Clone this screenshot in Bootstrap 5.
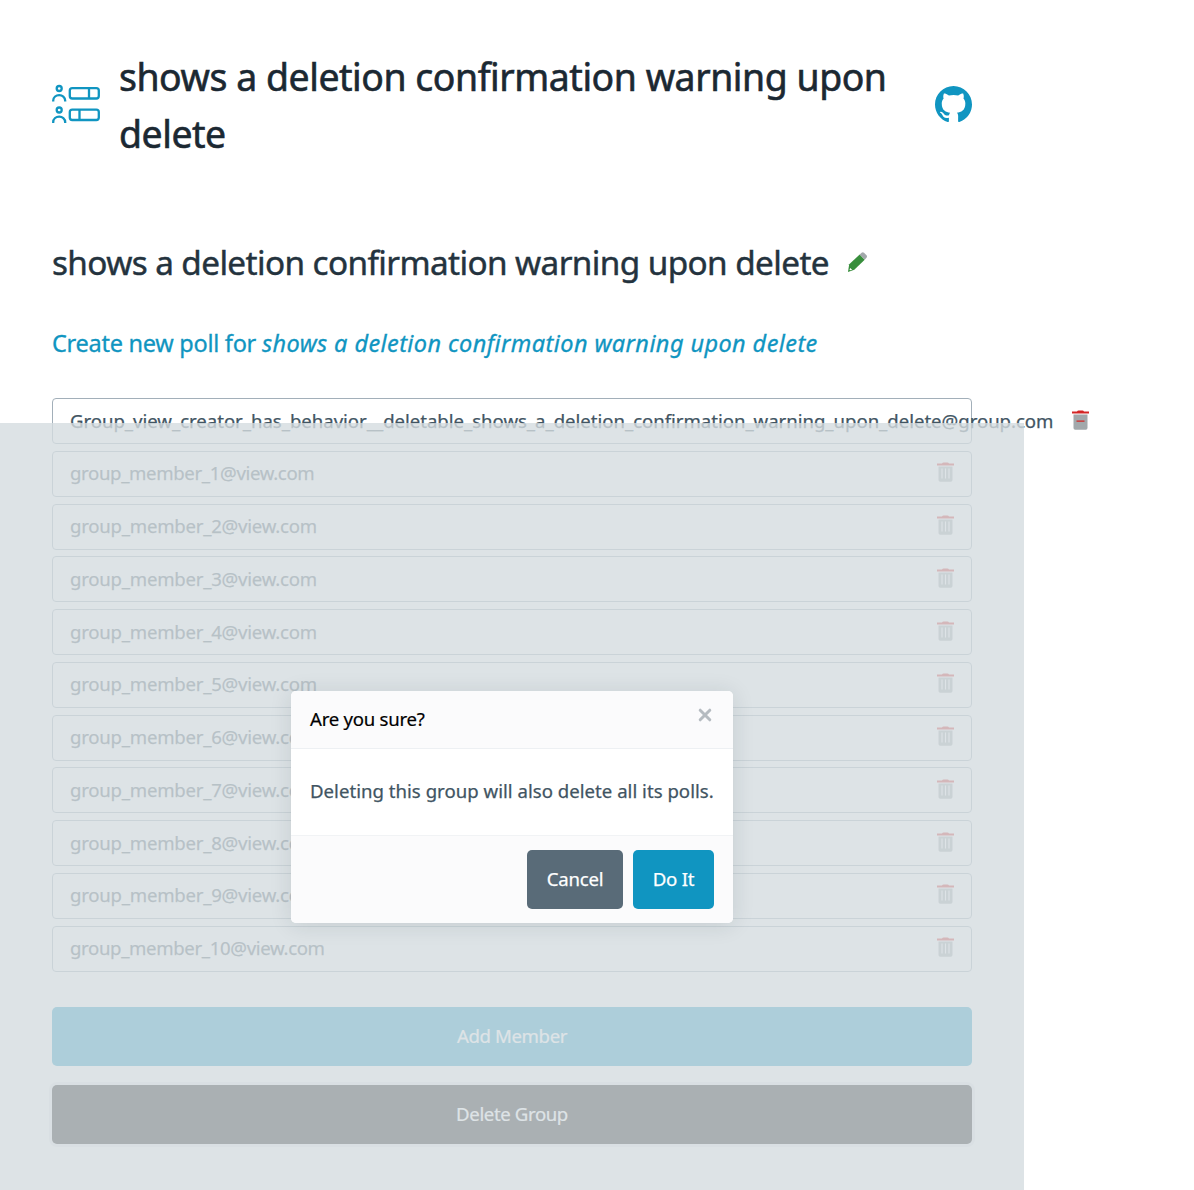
<!DOCTYPE html>
<html lang="en">
<head>
<meta charset="utf-8">
<title>Group</title>
<link rel="stylesheet" href="https://cdn.jsdelivr.net/npm/bootstrap@5.3.0/dist/css/bootstrap.min.css">
<style>
body{font-family:"Noto Sans","Open Sans",sans-serif;font-size:18.6px;color:#415462;background:#fff;height:1190px;overflow:hidden}
.page{width:1024px;padding:0 52px}
.masthead{padding-top:48px;height:162px}
.masthead h1{font-size:37.4px;line-height:57px;font-weight:400;color:#1b2832;width:816px;letter-spacing:-.45px;-webkit-text-stroke:.6px #1b2832;margin:0}
.logo{width:48px;margin:36px 19px 0 0;flex:none}
.octo{margin-top:37.5px}
.group-name{margin-top:75px;height:50px}
.group-name h2{font-size:33.3px;line-height:50px;font-weight:400;color:#24333e;margin:0 18px 0 0;white-space:nowrap;letter-spacing:-.6px;-webkit-text-stroke:.45px #24333e}
.new-poll{margin-top:38px;height:36px;line-height:36px;font-size:23.5px;color:#1095c1;text-decoration:none;white-space:nowrap;display:block;letter-spacing:-.27px;-webkit-text-stroke:.3px #1095c1}
.new-poll em{letter-spacing:.41px}
.members{margin-top:37px;gap:6.75px}
.member{height:46px;border:1px solid #a2afb9;border-radius:4px;padding:0 17px;white-space:nowrap;letter-spacing:-.24px;-webkit-text-stroke:.25px;line-height:26px}
.member span{margin-top:-1px}
.member.creator{letter-spacing:-.03px}
.member.tight{letter-spacing:-.35px}
.member svg{flex:none;margin-left:19px;margin-top:-3px}
.wide{height:59px;border:0;border-radius:5px;font-size:18.6px;color:#fff;letter-spacing:-.38px;padding:0 0 2px;-webkit-text-stroke:.2px}
.wide.add{background:#1095c1;margin-top:35.500px}
.wide.del{background:#000;margin-top:19px;box-shadow:0 0 0 3px rgba(89,107,120,.125)}
.shade{left:0;top:423px;width:1024px;height:767px;background:rgba(213,220,224,.8)}
.dialog{width:442px;height:232px;border-radius:5px;background:#fff;box-shadow:0 2px 22px rgba(27,40,50,.12);overflow:hidden}
.dialog header{height:58px;padding:0 19px;background:#fbfbfc;border-bottom:1px solid #edf0f3;color:#000;letter-spacing:-.25px;-webkit-text-stroke:.2px}
.dialog p{height:86px;padding:0 19px;margin:0;line-height:83px;white-space:nowrap;letter-spacing:.02px;-webkit-text-stroke:.25px}
.dialog footer{height:88px;padding:0 19px;gap:10px;background:#fbfbfc;border-top:1px solid #f1f3f5}
.dialog .btn{height:59px;border:0;border-radius:5px;color:#fff;font-size:18.6px;padding:0;letter-spacing:-.25px;-webkit-text-stroke:.25px}
.dialog .cancel{width:96px;background:#596b78}
.dialog .doit{width:81px;background:#1095c1}
.dialog header svg{margin:-9px 2px 0 0}
</style>
<script src="https://cdn.jsdelivr.net/npm/bootstrap@5.3.0/dist/js/bootstrap.bundle.min.js"></script>
</head>
<body>
<svg class="d-none">
<symbol id="bin" viewBox="0 0 17 20"><path d="M1.500 4.500h14V18q0 1.700-1.700 1.700H3.200Q1.500 19.700 1.500 18z" fill="#a2a8ab"/><path d="M5 6.500v10M8.500 6.500v10M12 6.500v10" stroke="#fff" stroke-width="1.100"/><path d="M0 1.600h5Q5.500.500 6.500.500h4q1 0 1.500 1.100h5V3.600H0z" fill="#d32626"/></symbol>
</svg>
<main class="page">
<header class="masthead d-flex align-items-start justify-content-between">
<div class="d-flex">
<svg class="logo" width="48" height="40" viewBox="0 0 48 40" fill="none" stroke="#1095c1" stroke-width="2.300"><circle cx="7.200" cy="4.500" r="2.500"/><path d="M1.200 17.600v-.8C1.200 9.200 13.200 9.200 13.200 16.800v.8M1.200 39.100v-.8c0-7.600 12-7.600 12 0v.8"/><circle cx="7.200" cy="26" r="2.500"/><rect x="17.800" y="4.100" width="29" height="10.400" rx="2.500"/><rect x="17.800" y="25.600" width="29" height="10.400" rx="2.500"/><path d="M37 4v10.500M27.500 25.500V36"/></svg>
<h1>shows a deletion confirmation warning upon delete</h1>
</div>
<svg class="octo" width="37" height="37" viewBox="0 0 16 16" fill="#1095c1"><path d="M8 0C3.580 0 0 3.580 0 8c0 3.540 2.290 6.530 5.470 7.590.4.070.55-.17.55-.38 0-.19-.01-.82-.01-1.490-2.010.37-2.530-.49-2.690-.94-.09-.23-.48-.94-.82-1.130-.28-.15-.68-.52-.01-.53.63-.01 1.080.58 1.230.82.72 1.210 1.870.87 2.330.66.07-.52.28-.87.51-1.070-1.780-.2-3.640-.89-3.640-3.950 0-.87.31-1.590.82-2.150-.08-.2-.36-1.020.08-2.120 0 0 .67-.21 2.200.82.64-.18 1.320-.27 2-.27s1.360.09 2 .27c1.530-1.040 2.200-.82 2.200-.82.44 1.100.16 1.920.08 2.120.51.56.82 1.270.82 2.150 0 3.070-1.870 3.750-3.650 3.950.29.25.54.73.54 1.480 0 1.070-.01 1.930-.01 2.200 0 .21.15.46.55.38A8.010 8.010 0 0 0 16 8c0-4.420-3.580-8-8-8z"/></svg>
</header>
<div class="group-name d-flex align-items-center">
<h2>shows a deletion confirmation warning upon delete</h2>
<svg width="21" height="21" viewBox="0 0 21 21"><path d="M2.200 12.200 12.700 2.600l5 5.200L7.300 17.700 1 20z" fill="#388e3c"/><path d="m12.700 2.600 1.900-1.800q1.200-1 2.400 0L19.500 3.300q1 1.200 0 2.400l-1.800 2.100z" fill="#a2a8ab"/><path d="m3.200 16 2 1.700-2 .6-.7-.5z" fill="#fff"/></svg>
</div>
<a class="new-poll" href="#">Create new poll for <em>shows a deletion confirmation warning upon delete</em></a>
<div class="members d-flex flex-column">
<div class="member creator d-flex align-items-center"><span>Group_view_creator_has_behavior__deletable_shows_a_deletion_confirmation_warning_upon_delete@group.com</span><svg width="17" height="20" viewBox="0 0 17 20"><path d="M1.500 4.500h14V18q0 1.700-1.700 1.700H3.200Q1.500 19.700 1.500 18z" fill="#a2a8ab"/><path d="M0 1.600h5Q5.500.5 6.500.5h4q1 0 1.500 1.100h5V3.600H0zM4.500 10.500h8v1.300h-8z" fill="#d32626"/></svg></div>
<div class="member tight d-flex align-items-center justify-content-between"><span>group_member_1@view.com</span><svg width="17" height="20"><use href="#bin"/></svg></div>
<div class="member d-flex align-items-center justify-content-between"><span>group_member_2@view.com</span><svg width="17" height="20"><use href="#bin"/></svg></div>
<div class="member d-flex align-items-center justify-content-between"><span>group_member_3@view.com</span><svg width="17" height="20"><use href="#bin"/></svg></div>
<div class="member d-flex align-items-center justify-content-between"><span>group_member_4@view.com</span><svg width="17" height="20"><use href="#bin"/></svg></div>
<div class="member d-flex align-items-center justify-content-between"><span>group_member_5@view.com</span><svg width="17" height="20"><use href="#bin"/></svg></div>
<div class="member d-flex align-items-center justify-content-between"><span>group_member_6@view.com</span><svg width="17" height="20"><use href="#bin"/></svg></div>
<div class="member d-flex align-items-center justify-content-between"><span>group_member_7@view.com</span><svg width="17" height="20"><use href="#bin"/></svg></div>
<div class="member d-flex align-items-center justify-content-between"><span>group_member_8@view.com</span><svg width="17" height="20"><use href="#bin"/></svg></div>
<div class="member d-flex align-items-center justify-content-between"><span>group_member_9@view.com</span><svg width="17" height="20"><use href="#bin"/></svg></div>
<div class="member tight d-flex align-items-center justify-content-between"><span>group_member_10@view.com</span><svg width="17" height="20"><use href="#bin"/></svg></div>
</div>
<button class="btn wide add w-100 d-block">Add Member</button>
<button class="btn wide del w-100 d-block">Delete Group</button>
</main>
<div class="shade position-absolute d-flex align-items-center justify-content-center">
<section class="dialog" role="dialog">
<header class="d-flex align-items-center justify-content-between"><span>Are you sure?</span><svg width="14" height="14" viewBox="0 0 14 14"><path d="m2.200 2.200 9.600 9.600m0-9.600-9.600 9.600" stroke="#b5bbc0" stroke-width="3" stroke-linecap="round"/></svg></header>
<p>Deleting this group will also delete all its polls.</p>
<footer class="d-flex align-items-center justify-content-end"><button class="btn cancel">Cancel</button><button class="btn doit">Do It</button></footer>
</section>
</div>
</body>
</html>
